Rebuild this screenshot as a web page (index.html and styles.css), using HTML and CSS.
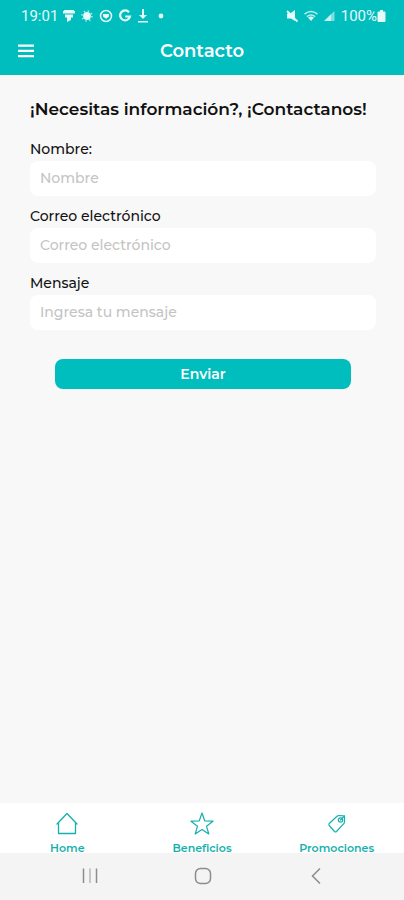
FILE: index.html
```html
<!DOCTYPE html>
<html lang="es">
<head>
<meta charset="utf-8">
<meta name="viewport" content="width=device-width, initial-scale=1">
<title>Contacto</title>
<link rel="stylesheet" href="styles.css">
</head>
<body>
<header class="top">
  <div class="status">
    <div class="status-left">
      <span class="clock">19:01</span>
      <svg width="12" height="14" viewBox="0 0 12 14" fill="currentColor"><path d="M1 1h10v1h1v2.500H0V2h1zM2 5.500h8v3H8V11l-4 2V8.500H2z"/></svg>
      <svg width="14" height="14" viewBox="0 0 14 14" fill="currentColor"><circle cx="7" cy="7" r="3.900"/><circle cx="7" cy="7" r="5" fill="none" stroke="currentColor" stroke-width="1.600" stroke-dasharray="1.500 2.430" opacity=".7"/></svg>
      <svg width="14" height="14" viewBox="0 0 14 14" fill="none" stroke="currentColor" stroke-width="1.500"><circle cx="7" cy="7" r="5.500"/><path d="M4 5h6v2.500L7 9.800 4 7.500z" fill="currentColor" stroke="none"/></svg>
      <svg width="14" height="14" viewBox="0 0 14 14" fill="none" stroke="currentColor" stroke-width="2.200"><path d="M11 3.200A5 5 0 1 0 12 7.500H7.200"/></svg>
      <svg width="12" height="14" viewBox="0 0 12 14" fill="currentColor"><path d="M5 0h2v6h3l-4 4-4-4h3zM1 12h10v1.500H1z"/></svg>
      <svg class="dot" width="6" height="14" viewBox="0 0 6 14" fill="currentColor"><circle cx="3" cy="7" r="2.400"/></svg>
    </div>
    <div class="status-right">
      <svg width="12" height="14" viewBox="0 0 12 14" fill="currentColor"><path d="M1 4.500h3L9 1v11L5 9.500H1z"/><path d="M1 2l10.500 10.500" stroke="currentColor" stroke-width="1.800"/></svg>
      <svg width="14" height="14" viewBox="0 0 14 14" fill="none" stroke="currentColor" stroke-width="1.500"><path d="M.5 5.200Q7 0 13.500 5.200M2.800 7.600Q7 4.500 11.200 7.600" opacity=".8"/><path d="M4 8.500Q7 6.500 10 8.500L7 12z" fill="currentColor" stroke="none"/></svg>
      <svg width="11" height="14" viewBox="0 0 11 14" fill="currentColor"><path d="M0 12L10.500 2v10z" opacity=".55"/><path d="M0 12l7-6.700V12z" opacity=".7"/></svg>
      <span class="charge">100%<svg width="9" height="14" viewBox="0 0 9 14" fill="currentColor"><path d="M3 1h3v1.500h1.500q1 0 1 1V12q0 1-1 1h-6q-1 0-1-1V3.500q0-1 1-1H3z"/></svg></span>
    </div>
  </div>
  <div class="bar">
    <button class="menu" type="button" aria-label="Menú">
      <svg width="16" height="14" viewBox="0 0 16 14" fill="currentColor"><path d="M0 .5h16v2.300H0zM0 5.800h16v2.300H0zM0 11h16v2.300H0z"/></svg>
    </button>
    <h1 class="title">Contacto</h1>
  </div>
</header>

<main class="content">
  <h2 class="lead">¡Necesitas información?, ¡Contactanos!</h2>
  <form class="form">
    <div class="field">
      <label for="nombre">Nombre:</label>
      <input id="nombre" type="text" placeholder="Nombre">
    </div>
    <div class="field">
      <label for="correo">Correo electrónico</label>
      <input id="correo" type="email" placeholder="Correo electrónico">
    </div>
    <div class="field">
      <label for="mensaje">Mensaje</label>
      <input id="mensaje" type="text" placeholder="Ingresa tu mensaje">
    </div>
    <button class="send" type="submit">Enviar</button>
  </form>
</main>

<nav class="tabs">
  <a class="tab" href="#home">
    <svg width="24" height="24" viewBox="0 0 24 24" fill="none" stroke="currentColor" stroke-width="1.300" stroke-linejoin="round" stroke-linecap="round"><path d="M2 12L12 1.500 22 12M3.500 10.500v11h17v-11"/></svg>
    <span>Home</span>
  </a>
  <a class="tab" href="#beneficios">
    <svg width="24" height="24" viewBox="0 0 24 24" fill="none" stroke="currentColor" stroke-width="1.200" stroke-linejoin="round"><path d="M12 1l2.700 7.800 8.300.4-6.500 5 2.300 7.800L12 17.500 5.200 22l2.300-7.800-6.500-5 8.300-.4z"/></svg>
    <span>Beneficios</span>
  </a>
  <a class="tab" href="#promociones">
    <svg width="24" height="24" viewBox="0 0 24 24" fill="none" stroke="currentColor" stroke-width="1.200" stroke-linejoin="round" stroke-linecap="round"><path d="M4.200 11.500L12 4.200Q12.800 3.500 14 3.500l4.500.3q1 0 1 1v5q0 1-.5 1.500L11.500 19.500Q10.500 20.500 9.500 19.500L4.200 13.500Q3.500 12.500 4.200 11.500z"/><circle cx="15.500" cy="8" r="2.200"/><path d="M15.500 8l4-4.200"/></svg>
    <span>Promociones</span>
  </a>
</nav>

<div class="system">
  <button type="button" aria-label="Recientes"><svg width="18" height="18" viewBox="0 0 18 18" fill="none" stroke="currentColor" stroke-width="1.500"><path d="M2.500 1.500v14.500M15.500 1.500v14.500"/><path d="M9 1.500v14.500" opacity=".6"/></svg></button>
  <button type="button" aria-label="Inicio"><svg width="18" height="18" viewBox="0 0 18 18" fill="none" stroke="currentColor" stroke-width="1.500"><rect x="1.500" y="1.500" width="15" height="15" rx="5"/></svg></button>
  <button type="button" aria-label="Atrás"><svg width="18" height="18" viewBox="0 0 18 18" fill="none" stroke="currentColor" stroke-width="1.500"><path d="M13 1.500L5.500 9l7.500 7.500"/></svg></button>
</div>
</body>
</html>
```
FILE: styles.css
```css
* {
  box-sizing: border-box;
}

body {
  margin: 0;
  min-height: 100vh;
  display: flex;
  flex-direction: column;
  background: #f8f8f8;
  color: #111;
  font-family: Montserrat, Inter, sans-serif;
}

button,
input {
  font: inherit;
  border: 0;
}

button {
  padding: 0;
  background: none;
  color: inherit;
}

svg {
  display: block;
}

.top {
  background: #00bdbe;
  color: #fff;
}

.status {
  display: flex;
  justify-content: space-between;
  height: 32px;
  padding: 0 18px 0 21px;
  font-family: Roboto, sans-serif;
  font-size: 15px;
  color: #e6fafa;
}

.status-left,
.status-right,
.charge {
  display: flex;
  align-items: center;
}

.status-left {
  gap: 5px;
}

.status-right {
  gap: 6px;
}

.dot {
  margin-left: 4px;
}

.bar {
  display: grid;
  grid-template-columns: 48px 1fr 48px;
  align-items: center;
  height: 43px;
  padding-bottom: 6px;
}

.menu {
  padding: 8px 18px;
}

.title {
  margin: 0;
  font-size: 18px;
  font-weight: 600;
  text-align: center;
}

.content {
  flex: 1;
  padding: 22px 28px 0 30px;
}

.lead {
  margin: 0 0 16px;
  font-size: 17px;
  line-height: 24px;
  font-weight: 600;
  white-space: nowrap;
}

.form {
  display: flex;
  flex-direction: column;
  gap: 8px;
}

.field {
  display: flex;
  flex-direction: column;
  font-size: 14px;
  font-weight: 500;
}

.field label {
  line-height: 24px;
}

.field input {
  height: 35px;
  padding: 0 10px 2px;
  border-radius: 8px;
  background: #fff;
}

.field input::placeholder {
  color: #c4c4c4;
  opacity: 1;
}

.send {
  height: 30px;
  margin: 21px 25px 0;
  border-radius: 8px;
  background: #00bdbe;
  color: #fff;
  font-size: 14px;
  font-weight: 600;
}

.tabs {
  display: grid;
  grid-template-columns: repeat(3, 1fr);
  height: 50px;
  padding-top: 9px;
  background: #fff;
}

.tab {
  display: flex;
  flex-direction: column;
  align-items: center;
  gap: 6px;
  color: #14b1ad;
  font-size: 11px;
  line-height: 12px;
  font-weight: 600;
  text-decoration: none;
}

.system {
  display: grid;
  grid-template-columns: repeat(3, 1fr);
  height: 47px;
  padding: 0 31px 2px 33px;
  background: #f4f4f4;
  color: #8c8c8c;
}

.system button {
  display: grid;
  place-items: center;
}
```
